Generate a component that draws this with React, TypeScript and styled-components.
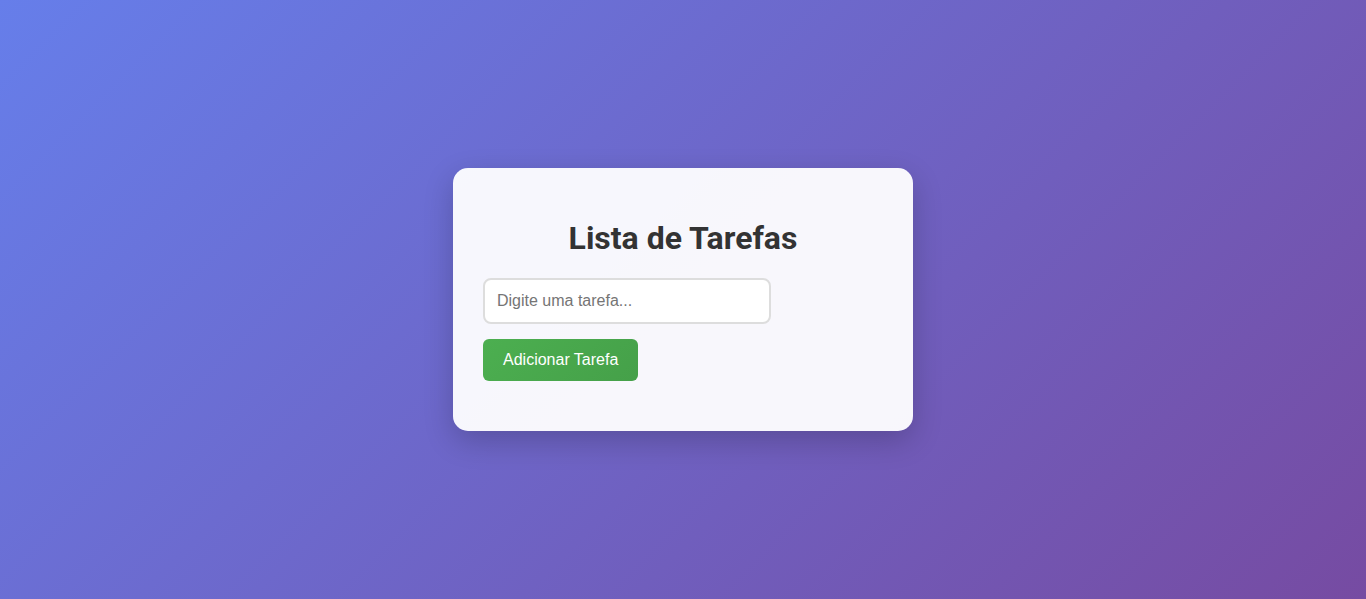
import React, { useState } from 'react';
import styled, { createGlobalStyle } from 'styled-components';

const GlobalStyle = createGlobalStyle`
  * { box-sizing: border-box; }
  html, body { margin: 0; padding: 0; height: 100%; }
  body {
    font-family: "Liberation Sans", Arial, sans-serif;
    background: linear-gradient(135deg, #667eea 0%, #764ba2 100%);
    min-height: 100vh;
  }
  #root { min-height: 100vh; }
`;

const Page = styled.div`
  display: flex;
  align-items: center;
  justify-content: center;
  min-height: 100vh;
`;

const Card = styled.div`
  width: 460px;
  padding: 30px 30px 50px;
  background: rgba(255, 255, 255, 0.95);
  border-radius: 15px;
  box-shadow: 0 10px 30px rgba(0, 0, 0, 0.2);
`;

const Title = styled.h1`
  margin: 21px 0 21px;
  text-align: center;
  font-family: Roboto, "Liberation Sans", sans-serif;
  font-size: 32px;
  font-weight: 700;
  color: #333;
`;

const Input = styled.input`
  display: block;
  width: 288px;
  height: 46px;
  padding: 12px;
  border: 2px solid #ddd;
  border-radius: 8px;
  background: #fff;
  font-family: "Liberation Sans", Arial, sans-serif;
  font-size: 16px;
  color: #333;
  outline: none;

  &::placeholder { color: #757575; }
`;

const AddButton = styled.button`
  display: block;
  margin-top: 15px;
  height: 42px;
  padding: 0 20px;
  border: none;
  border-radius: 6px;
  background: linear-gradient(135deg, #4caf50, #45a049);
  color: #fff;
  font-family: "Liberation Sans", Arial, sans-serif;
  font-size: 16px;
  cursor: pointer;
`;

const TaskList = styled.ul`
  list-style: none;
  margin: 0;
  padding: 0;
`;

export default function App() {
  const [text, setText] = useState('');
  const [tasks, setTasks] = useState<string[]>([]);

  const addTask = () => {
    if (!text.trim()) return;
    setTasks([...tasks, text.trim()]);
    setText('');
  };

  return (
    <>
      <GlobalStyle />
      <Page>
        <Card>
          <Title>Lista de Tarefas</Title>
          <Input
            placeholder="Digite uma tarefa..."
            value={text}
            onChange={e => setText(e.target.value)}
          />
          <AddButton onClick={addTask}>Adicionar Tarefa</AddButton>
          {tasks.length > 0 && (
            <TaskList>
              {tasks.map((t, i) => <li key={i}>{t}</li>)}
            </TaskList>
          )}
        </Card>
      </Page>
    </>
  );
}
